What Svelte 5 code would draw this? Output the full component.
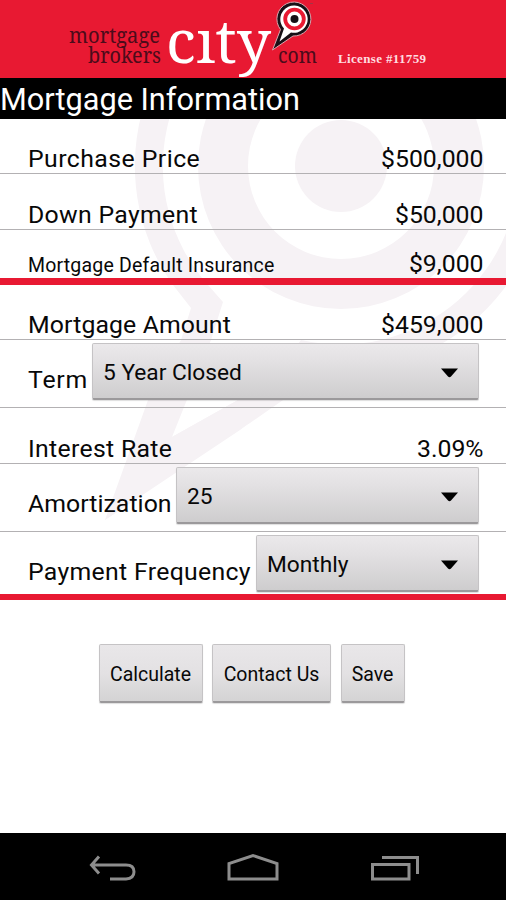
<script>
  const actions = [
    { label: 'Calculate', width: 104 },
    { label: 'Contact Us', width: 119 },
    { label: 'Save', width: 64 }
  ];
</script>

{#snippet picker(value, width)}
  <button class="select" style:width="{width}px">
    <span>{value}</span>
    <svg width="17" height="10" viewBox="0 0 17 10"><path d="M0 .5H17L10 8.6Q8.5 10 7 8.6Z" /></svg>
  </button>
{/snippet}

<div class="screen">
  <header>
    <svg width="506" height="78" viewBox="0 0 506 78">
      <g class="serif" fill="#4d0b1a">
        <text x="69" y="42.500" font-size="21.500" textLength="91" lengthAdjust="spacingAndGlyphs">mortgage</text>
        <text x="88" y="62.500" font-size="21.500" textLength="73" lengthAdjust="spacingAndGlyphs">brokers</text>
        <text x="278" y="63" font-size="22" textLength="39" lengthAdjust="spacingAndGlyphs">com</text>
      </g>
      <text class="serif" x="166" y="63" font-size="60" fill="#fff" textLength="105" lengthAdjust="spacingAndGlyphs">cıty</text>
      <path d="M272.500 50L280.500 29.500A17 17 0 1 1 293 36Z" fill="#171016" stroke="#d9a5ae" stroke-width="1" />
      <path d="M279.500 41.500L284 28.500A13.700 13.700 0 1 1 291 32.500Z" fill="#fff" />
      <circle cx="294.500" cy="19" r="9.300" fill="#fff" stroke="#e81932" stroke-width="3.800" />
      <circle cx="294.500" cy="19" r="4" fill="#171016" />
      <path d="M310 3.500h3" stroke="#a63445" stroke-width="1" />
      <text class="license" x="338" y="63" font-size="13" font-weight="bold" fill="#ffdce0" textLength="88">License #11759</text>
    </svg>
  </header>
  <h1>Mortgage Information</h1>

  <main>
    <svg class="watermark" width="506" height="481" viewBox="0 119 506 481">
      <g fill="#f6f2f5">
        <circle cx="341" cy="166" r="46" />
        <path fill-rule="evenodd" d="M198 166a143 143 0 1 0 286 0a143 143 0 1 0-286 0M248 166a93 93 0 1 0 186 0a93 93 0 1 0-186 0" />
        <path fill-rule="evenodd" d="M105 520L148 400L181 340L191 308L173 285A205 205 0 1 1 291 365Q284 396 240 430ZM172 437L211 340L223 302L208 285A178 178 0 1 1 301 340Q270 382 238 400Z" />
        <path d="M105 520L172 437L238 400L300 375L286 398L250 423L176 471Z" />
      </g>
    </svg>

    <div class="row h55"><span class="wider">Purchase Price</span><span class="value">$500,000</span></div>
    <div class="row h56"><span class="wide">Down Payment</span><span class="value">$50,000</span></div>
    <div class="row red h55"><span class="small">Mortgage Default Insurance</span><span class="value">$9,000</span></div>
    <div class="row h55"><span class="snug">Mortgage Amount</span><span class="value">$459,000</span></div>
    <div class="row h68 pick"><span class="term">Term</span>{@render picker('5 Year Closed', 387)}</div>
    <div class="row h56"><span class="wide">Interest Rate</span><span class="value">3.09%</span></div>
    <div class="row h68 pick"><span class="tight">Amortization</span>{@render picker('25', 303)}</div>
    <div class="row h68 pick red last"><span class="wide">Payment Frequency</span>{@render picker('Monthly', 223)}</div>
  </main>

  <div class="actions">
    {#each actions as action}
      <button style:width="{action.width}px">{action.label}</button>
    {/each}
  </div>

  <nav>
    <svg width="506" height="67" viewBox="0 833 506 67" fill="none" stroke="#8d8d8d" stroke-width="3">
      <path d="M99 856.500L91.500 865L99 873.500M92 865H126Q134 865 134 871.800T126 879H110" />
      <path d="M229 879V863.500L253 855.500L277 863.500V879Z" />
      <path d="M372.500 864.500H409V879H372.500ZM382 857.500H417.500V874" />
    </svg>
  </nav>
</div>

<style>
  :global(body) { margin: 0; }
  .screen {
    width: 506px;
    height: 900px;
    display: flex;
    flex-direction: column;
    background: #fff;
    color: #080808;
    font-family: Roboto, sans-serif;
    overflow: hidden;
  }
  header { height: 78px; background: #e81932; }
  svg { display: block; }
  .serif { font-family: "Noto Serif", "Liberation Serif", serif; }
  .license { font-family: "Liberation Serif", serif; }
  h1 {
    height: 41px;
    margin: 0;
    line-height: 43px;
    background: #000;
    color: #fff;
    font-size: 30.7px;
    font-weight: 400;
    white-space: nowrap;
  }
  main { position: relative; height: 481px; }
  .watermark { position: absolute; inset: 0; }
  .row {
    position: relative;
    box-sizing: border-box;
    display: flex;
    align-items: flex-end;
    justify-content: space-between;
    padding: 0 22.5px 0 28px;
    border-bottom: 1px solid #b3b1b3;
    font-size: 24.8px;
    line-height: 28px;
    white-space: nowrap;
  }
  .h55 { height: 55px; }
  .h56 { height: 56px; }
  .h68 { height: 68px; }
  .red { border-bottom: 7px solid #e81932; }
  .wider { letter-spacing: .45px; }
  .wide { letter-spacing: .32px; }
  .snug { letter-spacing: .12px; }
  .tight { letter-spacing: .05px; }
  .term { letter-spacing: .8px; }
  .small { font-size: 19.5px; line-height: 25px; letter-spacing: .19px; }
  .pick { padding-right: 27px; padding-bottom: 13px; }
  .last { border-bottom-width: 6px; padding-bottom: 8px; }
  .select {
    flex: none;
    align-self: flex-start;
    height: 57px;
    margin: 3px 0 -20px;
    padding: 2px 20px 0 10px;
    display: flex;
    align-items: center;
    justify-content: space-between;
    font-size: 22.7px;
  }
  .select svg { margin-top: 1px; }
  button {
    box-sizing: border-box;
    border: 1px solid #c5c3c5;
    border-bottom: 2px solid #9b999b;
    border-radius: 2px;
    background: linear-gradient(#ebe9eb, #e2e0e2 35%, #cecdce);
    box-shadow: 0 1px 1px #0002;
    color: #080808;
    font-family: inherit;
    padding: 0;
  }
  .actions {
    display: flex;
    justify-content: center;
    gap: 9.5px;
    padding: 44px 3px 0 0;
    height: 145px;
  }
  .actions button {
    height: 59px;
    padding-top: 2px;
    font-size: 19.5px;
    background: linear-gradient(#e9e7e9, #e3e1e3 50%, #d4d3d4);
  }
  nav { height: 67px; margin-top: auto; background: #000; }
</style>
